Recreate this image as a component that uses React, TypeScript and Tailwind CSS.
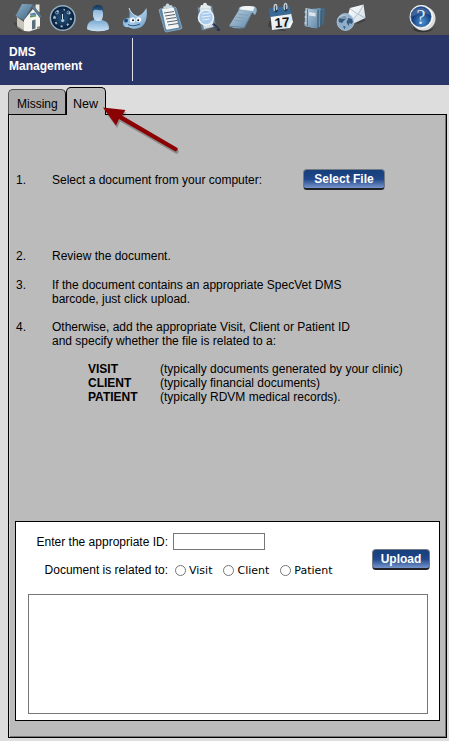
import type { ReactNode } from "react";

function Icon({ x, children }: { x: number; children: ReactNode }) {
  return (
    <svg className="block h-[35px] w-9 shrink-0" viewBox={`${x} 0 36 35`} aria-hidden="true">
      {children}
    </svg>
  );
}

function Gradients() {
  return (
    <svg className="absolute h-0 w-0" aria-hidden="true">
      <defs>
        <linearGradient id="roof" x1="0" y1="0" x2="1" y2="1">
          <stop offset="0" stopColor="#8fb3cb" />
          <stop offset="1" stopColor="#3b6283" />
        </linearGradient>
        <radialGradient id="dial">
          <stop offset="0" stopColor="#2b5a86" />
          <stop offset="1" stopColor="#0b2340" />
        </radialGradient>
        <linearGradient id="hair" x1="0" y1="0" x2="0" y2="1">
          <stop offset="0" stopColor="#16355a" />
          <stop offset="1" stopColor="#39658f" />
        </linearGradient>
        <linearGradient id="skin" x1="0" y1="0" x2="0" y2="1">
          <stop offset="0" stopColor="#7ba9d3" />
          <stop offset="1" stopColor="#c9e0f4" />
        </linearGradient>
        <linearGradient id="fur" x1="0" y1="0" x2="1" y2="1">
          <stop offset="0" stopColor="#4f80ad" />
          <stop offset="0.55" stopColor="#a5cbe9" />
          <stop offset="1" stopColor="#6898c3" />
        </linearGradient>
        <linearGradient id="steel" x1="0" y1="0" x2="1" y2="1">
          <stop offset="0" stopColor="#b9cfdf" />
          <stop offset="1" stopColor="#6489a8" />
        </linearGradient>
        <linearGradient id="paper" x1="0" y1="0" x2="1" y2="1">
          <stop offset="0" stopColor="#ffffff" />
          <stop offset="1" stopColor="#cfdde9" />
        </linearGradient>
        <radialGradient id="help" cx="0.55" cy="0.75">
          <stop offset="0" stopColor="#4c93d5" />
          <stop offset="1" stopColor="#123c7b" />
        </radialGradient>
      </defs>
    </svg>
  );
}

function Toolbar() {
  return (
    <nav className="flex h-[35px] bg-[#555555] pl-[10px] pr-[9px]">
      <Icon x={10}>
        <path d="M13 22l6 9 10 1-6-8z" fill="#333" opacity=".5" />
        <path d="M17 17l7 5v9l-7-5z" fill="#c9c6be" />
        <path d="M24 20l9-11 7 9v10l-11 3.500-5-.5z" fill="#f5f4ee" />
        <path d="M35.500 4.500h4v8l-4-4z" fill="#ece8de" />
        <path d="M22 4l11 .2L24 20l-8.500-4z" fill="url(#roof)" />
        <path d="M33 4.200l8.500 12.300-1.500 1.300-7.500-10z" fill="#557c99" />
        <path d="M30 13.500l5-1 1.500 2.500-6 1z" fill="#5e89b3" />
        <path d="M30 16l6-1v1.500l-6 1z" fill="#57925f" />
        <path d="M32 20.500l3.500-1v9l-3.500 1z" fill="#5b6e7b" />
        <path d="M17 26l7 4v1.500L17 27.500zM37 27l3-1v2l-3 1z" fill="#8b8a7d" />
      </Icon>
      <Icon x={46}>
        <circle cx="62.700" cy="18" r="12.300" fill="#0a2442" stroke="#94adc0" strokeWidth="1.500" />
        <circle cx="62.700" cy="18" r="10.800" fill="url(#dial)" />
        <circle cx="62.700" cy="18" r="8.300" fill="none" stroke="#c5d8e6" strokeWidth="1.800" strokeDasharray="2 4.520" opacity=".85" />
        <path d="M61 9v10h3.500l-1-10z" fill="#153558" />
        <circle cx="57" cy="12.500" r="1.500" fill="none" stroke="#9cb9cf" strokeWidth=".8" />
        <circle cx="68.500" cy="12.500" r="1.500" fill="none" stroke="#9cb9cf" strokeWidth=".8" />
        <path d="M62.500 20v-6M53 18h3" stroke="#dce8f1" strokeWidth="1" />
        <circle cx="62.700" cy="20.500" r="1.600" fill="#a8c6dc" />
      </Icon>
      <Icon x={82}>
        <path d="M87 29c0-5 2-8 7-9h8c5 1 7 4 7 9-3 3-19 3-22 0z" fill="url(#skin)" />
        <path d="M94 18h8v3c-2 2-6 2-8 0z" fill="#85b2d9" />
        <path d="M93 10c0-3 2-4 5-4s5 1 5 4v6c-1 5-3 5-5 5s-4-1-5-5z" fill="url(#skin)" />
        <path d="M92.500 13c-1-6 1-8 6-8 4 0 6 3 4.500 8l-1-3c-2 1-5-1-8 0z" fill="url(#hair)" />
      </Icon>
      <Icon x={118}>
        <path d="M128.500 7c2 5 5 8 9 9 4-1 6.500-4 9-8 1 8 0 14-4 18-4 3.500-10 3.500-14 1-5 1-6.500-3-5-7 1.500-2 4-2.500 6-2 0-4 .5-7-1-11z" fill="url(#fur)" />
        <path d="M129 8c1.500 4 4 7 8 8.500" fill="none" stroke="#c5def0" />
        <ellipse cx="132.500" cy="20" rx="2.800" ry="2.600" fill="#f3f8fc" />
        <ellipse cx="138.700" cy="19.800" rx="2.600" ry="2.500" fill="#f3f8fc" />
        <circle cx="133" cy="20.300" r="1" fill="#111e32" />
        <circle cx="138.200" cy="20.200" r="1" fill="#111e32" />
        <ellipse cx="126" cy="20.500" rx="2" ry="1.900" fill="#234d78" />
        <path d="M128 24.500c4 2 8 1.500 12-.5" fill="none" stroke="#345b84" strokeWidth="1.100" />
      </Icon>
      <Icon x={154}>
        <path d="M160 9l15-2 1 1 6 20-1 1-15 3-1-1-6-21z" fill="#5f86a5" stroke="#8eafc8" strokeWidth=".8" />
        <path d="M162 9l11-1.500 1 1 5 19-12 2.300-1-1z" fill="#f4f5f5" />
        <path d="M163.500 9l-.3-2.600 2.500-.5C165 3 169 2.500 169.500 5.200l2.500 0 .8 2.600z" fill="#c9d7df" />
        <path d="M164 13l10-1.500m-9 4.500l10-1.500m-9 4.500l10-1.500m-9 4.500l10-1.500m-9 4.500l10-1.500" stroke="#59646e" strokeWidth="1" />
      </Icon>
      <Icon x={190}>
        <path d="M197.500 7.500l14.500-2 4 21-13 4-1.500-1z" fill="#6a879f" />
        <path d="M199.500 8l11-1.500 3.500 20-10 2.500z" fill="#d4dde4" />
        <path d="M200 8l1-3h2c0-3 4-3 4 0l3 1 1 2z" fill="#e5eaed" />
        <circle cx="206" cy="17.500" r="7.500" fill="#a9cbed" stroke="#eaf2f8" strokeWidth="1.600" />
        <path d="M202 14l8-1m-8.500 4l9-1m-8 4l7-1" stroke="#e6f1fb" strokeWidth="1.200" />
        <path d="M212 24.500l2-1.500 6 6.500c0 1.500-1.500 2-2.500 1z" fill="#182b45" />
        <path d="M212.500 24l5.500 5.500" stroke="#7d91a9" strokeWidth=".7" />
      </Icon>
      <Icon x={226}>
        <path d="M229 26l10-16 14 1-8.500 17c-6 1-11 .5-15.500-2z" fill="url(#steel)" />
        <path d="M240 7l14-.5c3.500.5 3.500 5 1 8.500l-3-2.500-12-1.500c-2.500-1-1.500-3 0-4z" fill="#8eb1c9" />
        <path d="M240.500 7c3-1.200 11-1.200 14 0l-1.500 4-13-1.500z" fill="#f1f4f5" />
        <path d="M238 14l10 1.500m-12 1.500l10 1.500m-12 1.500l10 1.500" stroke="#789bb5" strokeWidth=".8" />
        <path d="M229.500 26l14.500 1.500 8-15" fill="none" stroke="#5c7f9b" strokeWidth=".8" />
      </Icon>
      <Icon x={262}>
        <path d="M270 20l-2 6 5 4 14 1-13-6z" fill="#333" opacity=".7" />
        <path d="M270.500 15l20.500-2 2 9-3 6-18 2z" fill="url(#paper)" />
        <path d="M269 8.500l19.500-2.500c1.500 1 2.500 7 2.500 8l-20.500 3c-1-2-1.500-5-1.500-8.500z" fill="#396a95" />
        <circle cx="276" cy="10.500" r="2" fill="#203d58" />
        <circle cx="285.500" cy="9.500" r="2" fill="#203d58" />
        <path d="M274.500 11c-2-9 4-8 2-1M284.500 10c-2-9 4-8 2-1" fill="none" stroke="#c6d2da" strokeWidth="1.300" />
        <text x="274.500" y="27" fontFamily="Liberation Sans, sans-serif" fontSize="13.500" fontWeight="700" fill="#111" transform="rotate(-5 282 21)">17</text>
        <path d="M293 21l-3 6.500-2.500.5 2-5z" fill="#f6f8f9" />
      </Icon>
      <Icon x={298}>
        <path d="M314 9l9.500-1 1.500 1-1.500 16-9.500 1z" fill="#456985" />
        <path d="M311 9l9-1 1 1-1 18-9 1z" fill="#6d92ae" />
        <path d="M305.500 8l12.500 2-1 18.500-11-2-1.500-1z" fill="url(#steel)" />
        <path d="M307.500 9v17" stroke="#486b89" strokeWidth=".8" />
        <path d="M309 12l6.500 1v3.500l-6.500-1z" fill="#dce6ec" />
        <path d="M318 10v17m3-17v15" stroke="#35566f" />
        <path d="M304.500 12h2m-2 5h2m-2 6h2" stroke="#dae5ed" />
      </Icon>
      <Icon x={334}>
        <path d="M356 23l10-6-1 4-7 3z" fill="#323232" opacity=".5" />
        <path d="M350 8l13.500-3.500 2 13.500-12 5.500-6-7z" fill="url(#paper)" />
        <path d="M350 8.500l8 6 5.500-9.500M358 14l7 4M357 15l-5 6" fill="none" stroke="#a3b1bd" strokeWidth=".8" />
        <circle cx="345.500" cy="22" r="8.400" fill="#8eaecc" stroke="#b9cfdf" strokeWidth=".8" />
        <path d="M338.500 20c2-4 6-4.500 8-3.500l0 2-2.500 2-2 2.500-3-1zM348.500 18l3.500 1 1 3-1.500 2-2-1-1 3-2-4zM343 26l2.500.5-1 3z" fill="#365a7c" />
        <ellipse cx="343.500" cy="17" rx="4" ry="2" fill="#e7f0f7" opacity=".4" />
      </Icon>
      <div className="ml-auto">
        <Icon x={404}>
          <path d="M413 27c5 5 17 5 22 0l-3 3c-4 3-14 3-18 0z" fill="#333" />
          <circle cx="423.500" cy="18.500" r="12" fill="#dcdedf" />
          <circle cx="421.300" cy="16.800" r="11.700" fill="#f7f8f8" />
          <circle cx="421" cy="16.800" r="10.200" fill="url(#help)" stroke="#436c9a" strokeWidth=".6" />
          <path d="M411.500 17c0-12 17-12 18.500-2-6-3-12-2-18.500 2z" fill="#c3d9ef" opacity=".25" />
          <text x="416.500" y="23.500" fontFamily="Liberation Serif, serif" fontSize="20" fill="#dfeaf5">?</text>
        </Icon>
      </div>
    </nav>
  );
}

function BlueButton({ label, className }: { label: string; className: string }) {
  return (
    <button
      type="button"
      className={`block h-[21px] rounded-[4px] border border-[#737b87] border-b-2 border-b-[#202226] bg-linear-to-b from-[#163f7c] via-[#20478a] to-[#7795cc] text-center text-[12px] leading-[17px] font-bold whitespace-nowrap text-white ${className}`}
    >
      {label}
    </button>
  );
}

function Arrow() {
  return (
    <svg className="absolute top-[74px] left-[100px] h-[86px] w-[84px]" viewBox="100 74 84 86" aria-hidden="true">
      <path d="M104 110l22.500 2.500-3.500 5.500 55.500 32.500c1 1-.8 4-2.500 3.300L120 121.500l-3 6.500z" fill="#222" opacity=".3" />
      <path d="M103 107.500l22.500 2.500-3.500 5.500 55.500 32.500c1 1-.8 4-2.500 3.300L119 119l-3 6.500z" fill="#8b0204" />
    </svg>
  );
}

const kinds = [
  { name: "VISIT", note: "(typically documents generated by your clinic)" },
  { name: "CLIENT", note: "(typically financial documents)" },
  { name: "PATIENT", note: "(typically RDVM medical records)." },
];

const options = ["Visit", "Client", "Patient"];

function Step({ number, className, children }: { number: number; className: string; children: ReactNode }) {
  return (
    <li className={`flex leading-[14px] ${className}`}>
      <span className="w-[36px] shrink-0">{number}.</span>
      <div className="whitespace-nowrap">{children}</div>
    </li>
  );
}

export default function App() {
  return (
    <div className="relative h-[741px] w-[449px] overflow-hidden bg-[#dddddd] font-['Liberation_Sans',Arial,sans-serif] text-[12px] text-black">
      <Gradients />
      <Toolbar />
      <header className="flex h-[50px] bg-[#2b3668] text-[12px] leading-[14px] font-bold text-white">
        <h1 className="w-[132px] pt-[10px] pl-[9px]">
          DMS
          <br />
          Management
        </h1>
        <div className="mt-[3px] h-[43px] w-px bg-[#dfe1e8]" />
      </header>

      <div className="flex h-[29px] items-end pl-2">
        <div className="h-[25px] w-[58px] rounded-t-[5px] border border-b-0 border-[#555] border-r-[#111] bg-[#ababab] pl-2 text-[12px] leading-[28px]">
          Missing
        </div>
        <div className="relative -mb-px h-[28px] w-[40px] rounded-t-[5px] border border-b-0 border-black bg-[#bbbbbb] pl-[6px] text-[12.500px] leading-[33px]">
          New
        </div>
      </div>

      <main className="ml-2 h-[624px] w-[439px] border border-black bg-[#bbbbbb] pt-[54px] pl-[6px] shadow-[inset_1px_0_#d0d0d0,inset_-1px_-1px_#777]">
        <ol className="h-[352px] pl-px">
          <Step number={1} className="h-[80px] pt-[4px]">
            <div className="flex">
              <span className="w-[251px]">Select a document from your computer:</span>
              <BlueButton label="Select File" className="-mt-[4px] w-[82px]" />
            </div>
          </Step>
          <Step number={2} className="h-[29px]">Review the document.</Step>
          <Step number={3} className="h-[42px]">
            If the document contains an appropriate SpecVet DMS
            <br />
            barcode, just click upload.
          </Step>
          <Step number={4} className="h-[42px]">
            Otherwise, add the appropriate Visit, Client or Patient ID
            <br />
            and specify whether the file is related to a:
          </Step>
          {kinds.map((kind) => (
            <li key={kind.name} className="flex pl-[72px] leading-[14px] whitespace-nowrap">
              <b className="w-[72px]">{kind.name}</b>
              <span>{kind.note}</span>
            </li>
          ))}
        </ol>

        <form className="h-[200px] w-[425px] border border-black bg-white pt-[11px] pl-3">
          <div className="flex h-[61px]">
            <div className="w-[344px]">
              <label className="flex">
                <span className="w-[140px] pt-[1px] text-right leading-[17px] whitespace-nowrap">Enter the appropriate ID:</span>
                <input className="ml-[5px] h-[17px] w-[92px] border border-[#767676] bg-white px-1 outline-none" />
              </label>
              <div className="mt-[10px] flex items-center">
                <span className="w-[140px] text-right leading-[17px] whitespace-nowrap">Document is related to:</span>
                <div className="ml-[7px] flex gap-[11px]">
                  {options.map((option) => (
                    <label key={option} className="flex items-center gap-[3px] pt-px font-['DejaVu_Sans',Verdana,sans-serif] text-[11px] leading-[17px]">
                      <input type="radio" name="kind" className="m-0 size-[11px] appearance-none rounded-full border border-[#767676] bg-white checked:bg-[#1b4687]" />
                      {option}
                    </label>
                  ))}
                </div>
              </div>
            </div>
            <BlueButton label="Upload" className="mt-[16px] w-[58px]" />
          </div>
          <textarea className="block h-[120px] w-[400px] resize-none border border-[#767676] bg-white p-1 outline-none" />
        </form>
      </main>
      <Arrow />
    </div>
  );
}
